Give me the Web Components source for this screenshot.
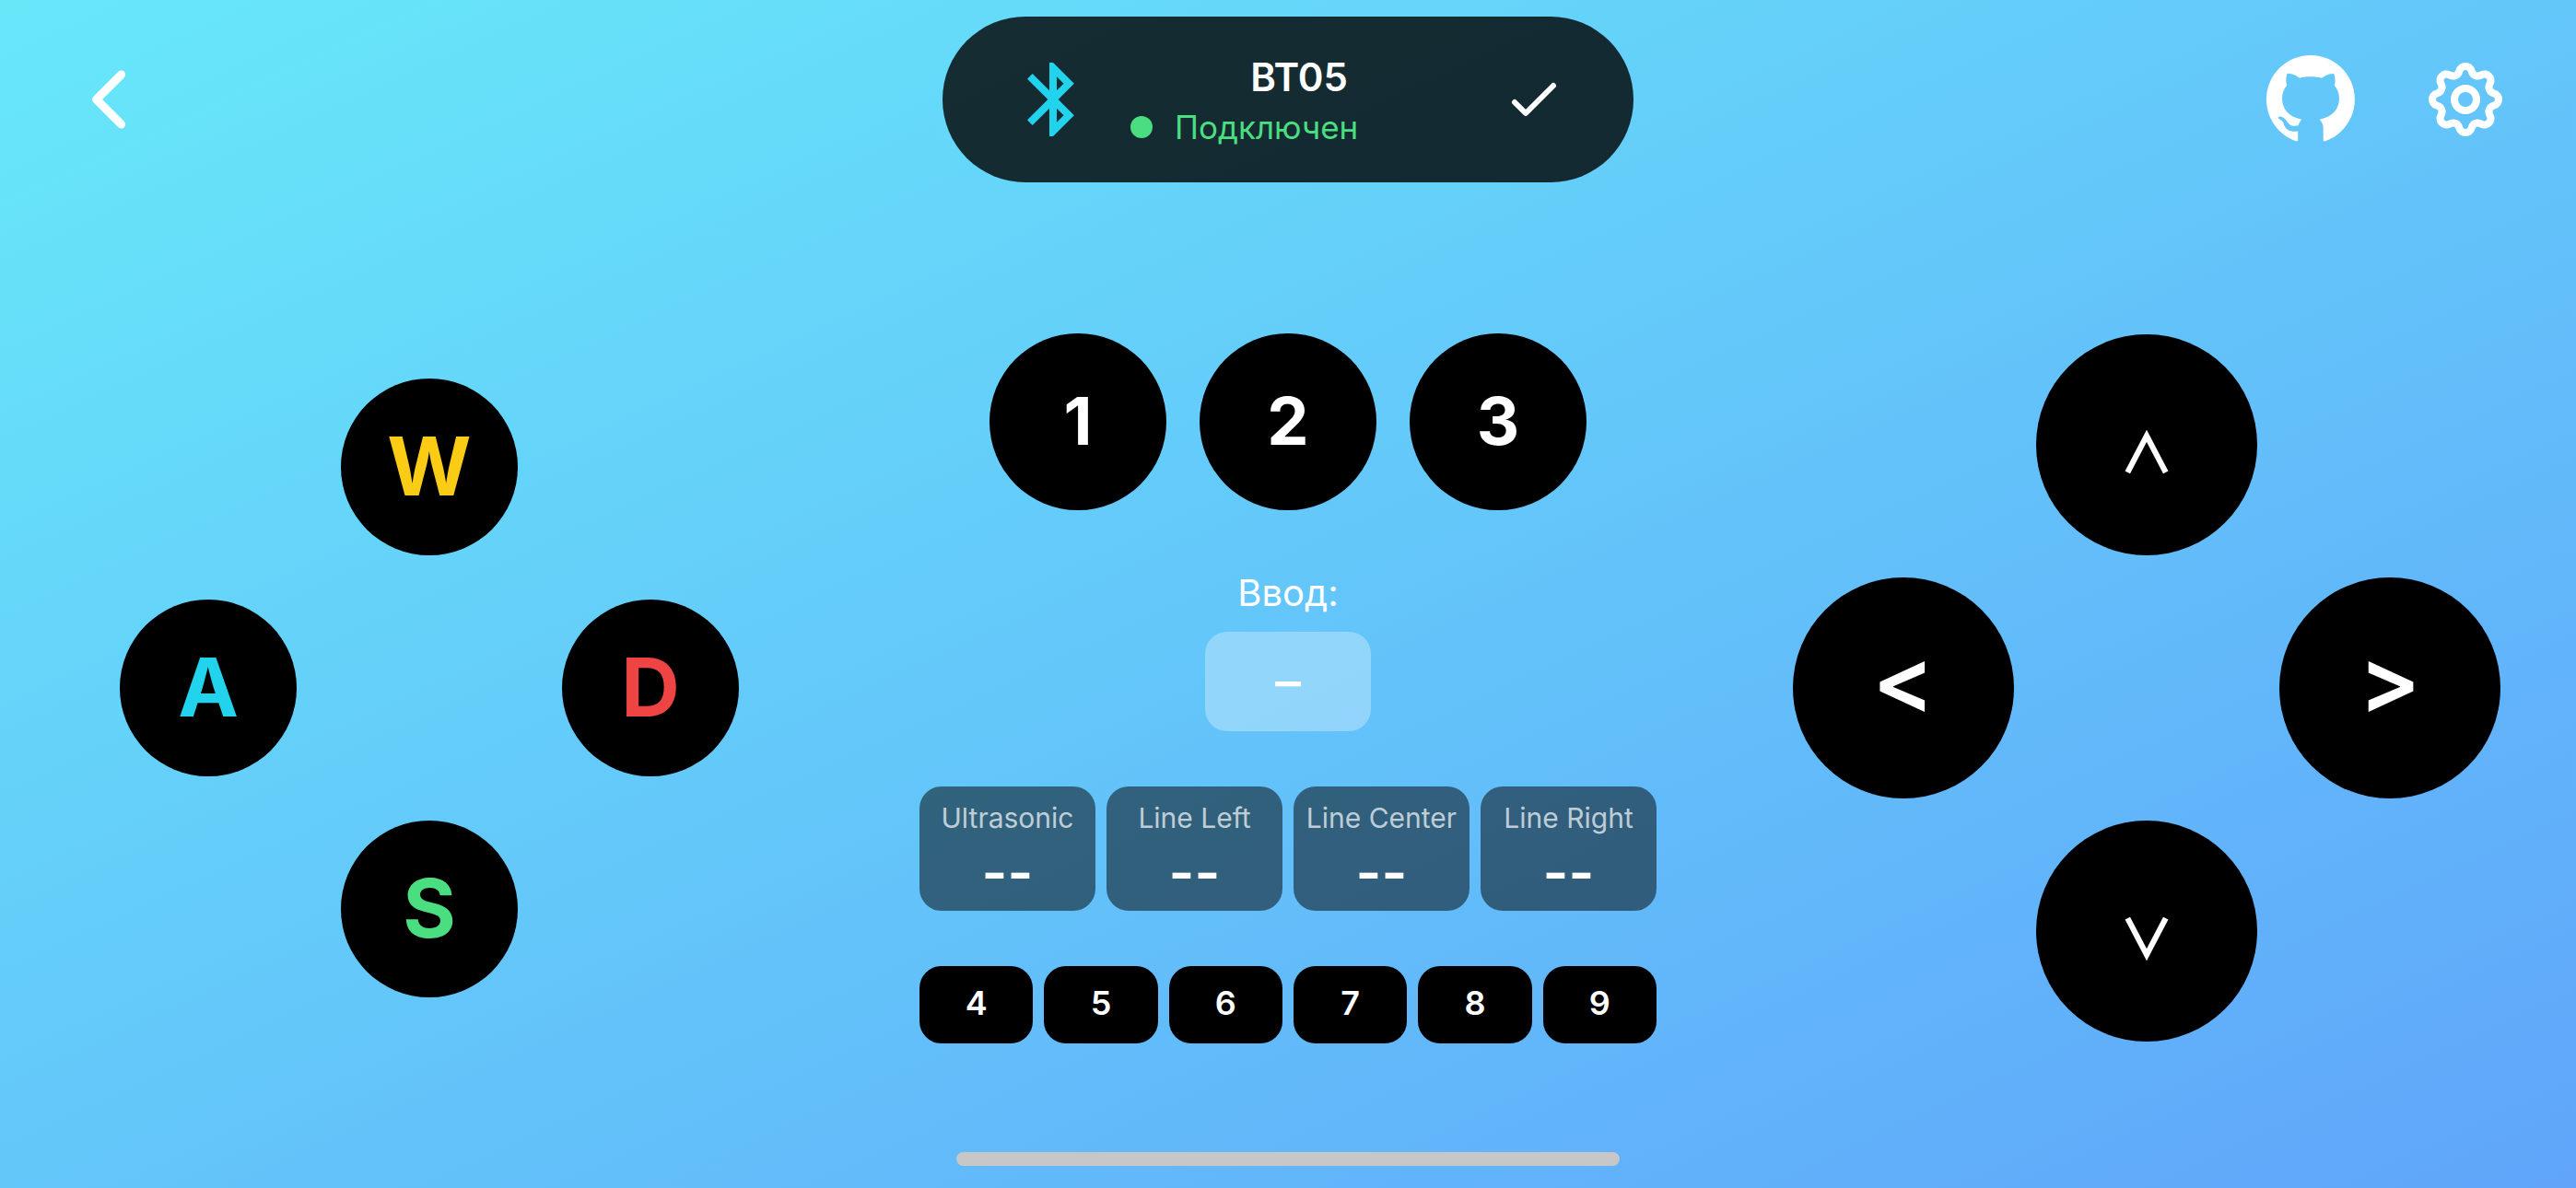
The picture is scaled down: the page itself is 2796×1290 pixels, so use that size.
<!DOCTYPE html>
<html lang="ru">
<head>
<meta charset="utf-8">
<meta name="viewport" content="width=device-width, initial-scale=1">
<title>BT05</title>
<style>
  html, body { margin: 0; min-height: 100%; }
  body { font-family: Inter, "Liberation Sans", sans-serif; color: #fff; }
</style>
</head>
<body>
<rc-app></rc-app>
<script>
  const define = (name, html) => {
    const template = document.createElement('template');
    template.innerHTML = html;
    customElements.define(name, class extends HTMLElement {
      constructor() {
        super();
        this.attachShadow({ mode: 'open' }).append(template.content.cloneNode(true));
      }
    });
  };

  // Icon-only header control; the slotted icon carries the accessible name.
  define('rc-icon-button', `
    <style>
      :host { display: block; }
      button { display: block; padding: 0; border: 0; background: none; color: inherit; cursor: pointer; }
      ::slotted(svg) { display: block; width: 96px; height: 96px; }
    </style>
    <button type="button"><slot></slot></button>`);

  define('rc-status', `
    <style>
      :host { display: flex; align-items: center; box-sizing: border-box; width: 750px; height: 180px;
        padding: 0 72px; border-radius: 90px; background: rgba(0, 0, 0, .8); }
      .bt { width: 96px; height: 96px; fill: #22d3ee; }
      .check { width: 72px; height: 72px; fill: none; stroke: #fff; }
      .text { flex: 1; }
      .name { font-size: 42px; line-height: 60px; font-weight: 600; text-align: center; }
      .state { display: flex; align-items: center; gap: 24px; padding-left: 36px;
        font-size: 35px; line-height: 48px; color: #4ade80; }
      .dot { width: 24px; height: 24px; border-radius: 50%; background: currentColor; }
    </style>
    <svg class="bt" viewBox="0 0 24 24" aria-hidden="true"><path d="M17.71 7.71 12 2h-1v7.59L6.41 5 5 6.41 10.59 12 5 17.59 6.41 19 11 14.41V22h1l5.71-5.71-4.3-4.29 4.3-4.29zM13 5.83l1.88 1.88L13 9.59V5.83zm1.88 10.46L13 18.17v-3.76l1.88 1.88z"/></svg>
    <div class="text">
      <div class="name"><slot name="device"></slot></div>
      <div class="state"><span class="dot"></span><slot></slot></div>
    </div>
    <svg class="check" viewBox="0 0 24 24" aria-hidden="true"><path d="m5 13 4 4L19 7" stroke-width="2" stroke-linecap="round" stroke-linejoin="round"/></svg>`);

  define('rc-header', `
    <style>
      :host { display: grid; grid-template-columns: 1fr auto 1fr; align-items: center; padding: 18px 72px 6px; }
      .links { display: flex; justify-content: flex-end; gap: 72px; }
    </style>
    <rc-icon-button>
      <svg viewBox="10 0 512 512" role="img" aria-label="Назад"><path d="M328 112 184 256l144 144" fill="none" stroke="currentColor" stroke-width="48" stroke-linecap="round" stroke-linejoin="round"/></svg>
    </rc-icon-button>
    <rc-status><span slot="device">BT05</span>Подключен</rc-status>
    <div class="links">
      <rc-icon-button>
        <svg viewBox="64 76 896 896" role="img" aria-label="GitHub"><path fill="currentColor" d="M511.6 76.3C264.3 76.2 64 276.4 64 523.5 64 718.9 189.3 885 363.8 946c23.5 5.9 19.9-10.8 19.9-22.2v-77.5c-135.7 15.9-141.2-73.9-150.3-88.9C215 726 171.5 718 184.5 703c30.9-15.9 62.4 4 98.9 57.9 26.4 39.1 77.9 32.5 104 26 5.7-23.5 17.9-44.5 34.7-60.8-140.6-25.2-199.2-111-199.2-213 0-49.5 16.3-95 48.3-131.7-20.4-60.5 1.9-112.3 4.9-120 58.1-5.2 118.5 41.6 123.2 45.3 33-8.9 70.7-13.6 112.9-13.6 42.4 0 80.2 4.9 113.5 13.9 11.3-8.6 67.3-48.8 121.3-43.9 2.9 7.7 24.7 58.3 5.5 118 32.4 36.8 48.9 82.7 48.9 132.3 0 102.2-59 188.1-200 212.9a127.5 127.5 0 0 1 38.1 91v112.5c.8 9 0 17.9 15 17.9 177.1-59.7 304.6-227 304.6-424.1 0-247.2-200.4-447.3-447.5-447.3z"/></svg>
      </rc-icon-button>
      <rc-icon-button>
        <svg viewBox="0 0 24 24" role="img" aria-label="Настройки" fill="none" stroke="currentColor" stroke-width="2" stroke-linecap="round" stroke-linejoin="round"><path d="M10.325 4.317c.426-1.756 2.924-1.756 3.35 0a1.724 1.724 0 0 0 2.573 1.066c1.543-.94 3.31.826 2.37 2.37a1.724 1.724 0 0 0 1.065 2.572c1.756.426 1.756 2.924 0 3.35a1.724 1.724 0 0 0-1.066 2.573c.94 1.543-.826 3.31-2.37 2.37a1.724 1.724 0 0 0-2.572 1.065c-.426 1.756-2.924 1.756-3.35 0a1.724 1.724 0 0 0-2.573-1.066c-1.543.94-3.31-.826-2.37-2.37a1.724 1.724 0 0 0-1.065-2.572c-1.756-.426-1.756-2.924 0-3.35a1.724 1.724 0 0 0 1.066-2.573c-.94-1.543.826-3.31 2.37-2.37 1 .608 2.296.07 2.572-1.065z"/><circle cx="12" cy="12" r="3"/></svg>
      </rc-icon-button>
    </div>`);

  define('rc-key', `
    <style>
      :host { display: block; width: 192px; height: 192px; font-size: 72px; font-weight: 700; }
      button { display: block; width: 100%; height: 100%; padding: 0 0 3px; text-align: center;
        border: 0; border-radius: 50%; background: #000; color: inherit; font: inherit;
        font-feature-settings: inherit; cursor: pointer; }
      :host([flat]) { flex: 1; width: auto; height: 84px; font-size: 36px; font-weight: 600; }
      :host([flat]) button { border-radius: 24px; }
    </style>
    <button type="button"><slot></slot></button>`);

  // Four keys laid out as a cross.
  define('rc-cross', `
    <style>
      :host { display: grid; grid-template-areas: ". up ." "left . right" ". down ."; gap: 48px; }
      slot { display: block; }
      [name=up] { grid-area: up; } [name=left] { grid-area: left; }
      [name=right] { grid-area: right; } [name=down] { grid-area: down; }
    </style>
    <slot name="up"></slot><slot name="left"></slot><slot name="right"></slot><slot name="down"></slot>`);

  define('rc-sensor', `
    <style>
      :host { display: block; flex: 1; padding: 12px 0 6px;
        border-radius: 24px; background: rgba(0, 0, 0, .5); text-align: center; }
      .label { font-size: 30px; line-height: 45px; color: rgba(255, 255, 255, .7); white-space: nowrap; }
      .value { font-size: 60px; line-height: 72px; font-weight: 600; }
    </style>
    <div class="label"><slot></slot></div>
    <div class="value">--</div>`);

  define('rc-panel', `
    <style>
      :host { display: flex; flex-direction: column; gap: 60px; width: 800px; }
      .round { display: flex; justify-content: center; gap: 36px; }
      .row { display: flex; gap: 12px; }
      .entry { display: flex; flex-direction: column; align-items: center; gap: 12px; }
      label { font-size: 40px; line-height: 60px; }
      output { width: 180px; border-radius: 24px; background: rgba(255, 255, 255, .3);
        font-size: 56px; line-height: 108px; font-weight: 500; text-align: center; }
    </style>
    <div class="round"><rc-key>1</rc-key><rc-key>2</rc-key><rc-key>3</rc-key></div>
    <div class="entry"><label for="entry">Ввод:</label><output id="entry">–</output></div>
    <div class="row"><rc-sensor>Ultrasonic</rc-sensor><rc-sensor>Line Left</rc-sensor><rc-sensor>Line Center</rc-sensor><rc-sensor>Line Right</rc-sensor></div>
    <div class="row"><rc-key flat>4</rc-key><rc-key flat>5</rc-key><rc-key flat>6</rc-key><rc-key flat>7</rc-key><rc-key flat>8</rc-key><rc-key flat>9</rc-key></div>`);

  define('rc-app', `
    <style>
      :host { position: relative; display: flex; flex-direction: column; min-height: 100vh;
        background: linear-gradient(to bottom right, #67e8f9, #60a5fa); }
      main { flex: 1; display: grid; grid-template-columns: repeat(3, 1fr); align-items: center; justify-items: center; }
      .letters rc-key { font-size: 88px; }
      .arrows { gap: 24px; }
      .arrows rc-key { width: 240px; height: 240px; font-size: 100px; font-weight: 600; font-feature-settings: "case"; }
      .arrows .caret { font-size: 88px; }
      .arrows small { font-family: "Noto Sans CJK JP", sans-serif; font-size: 60px; font-weight: 700; line-height: 1; }
      .home { position: absolute; bottom: 24px; left: 50%; width: 720px; height: 15px; margin-left: -360px;
        border-radius: 8px; background: #c7c7c7; }
    </style>
    <rc-header></rc-header>
    <main>
      <rc-cross class="letters">
        <rc-key slot="up" style="color:#facc15">W</rc-key>
        <rc-key slot="left" style="color:#22d3ee">A</rc-key>
        <rc-key slot="right" style="color:#ef4444">D</rc-key>
        <rc-key slot="down" style="color:#4ade80">S</rc-key>
      </rc-cross>
      <rc-panel></rc-panel>
      <rc-cross class="arrows">
        <rc-key slot="up" class="caret"><small>∧</small></rc-key>
        <rc-key slot="left">&lt;</rc-key>
        <rc-key slot="right">&gt;</rc-key>
        <rc-key slot="down" class="caret"><small>∨</small></rc-key>
      </rc-cross>
    </main>
    <div class="home"></div>`);
</script>
</body>
</html>
